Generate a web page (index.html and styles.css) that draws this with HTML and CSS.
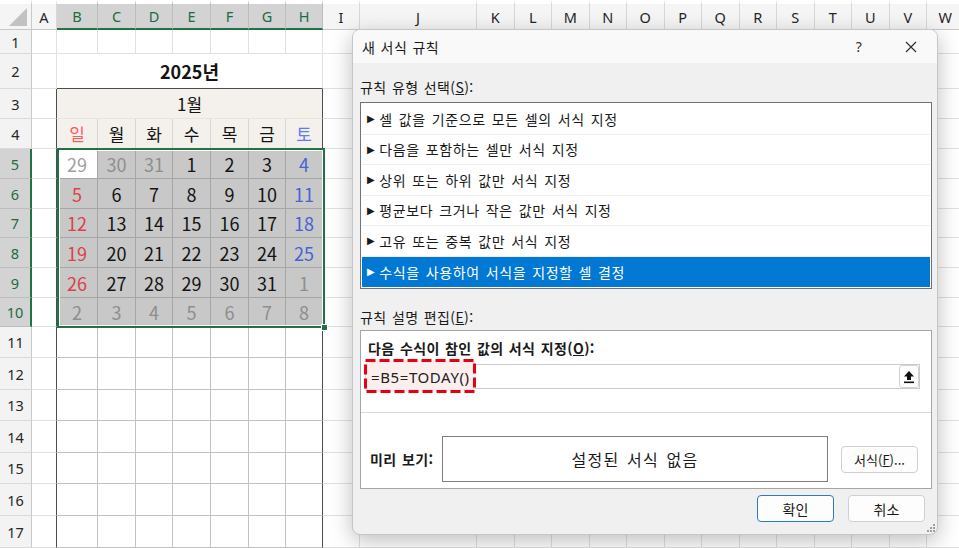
FILE: index.html
```html
<!DOCTYPE html>
<html lang="ko">
<head>
    <meta charset="UTF-8">
    <title>새 서식 규칙</title>
    <link rel="stylesheet" href="styles.css">
</head>
<body>
    <div class="screen">
        <div class="sheet" id="sheet">
            <div class="selection"></div>
        </div>

        <div class="dialog">
            <div class="dialog-title">
                <span class="title-text">새 서식 규칙</span>
                <span class="title-help">?</span>
                <span class="title-close">
                    <svg width="12" height="12" viewBox="0 0 12 12"><path d="M1 1L11 11M11 1L1 11" stroke="#2b2b2b" stroke-width="1.1" fill="none"/></svg>
                </span>
            </div>

            <div class="dialog-body">
                <div class="label">규칙 유형 선택(<u>S</u>):</div>
                <ul class="rule-list">
                    <li>셀 값을 기준으로 모든 셀의 서식 지정</li>
                    <li>다음을 포함하는 셀만 서식 지정</li>
                    <li>상위 또는 하위 값만 서식 지정</li>
                    <li>평균보다 크거나 작은 값만 서식 지정</li>
                    <li>고유 또는 중복 값만 서식 지정</li>
                    <li class="selected">수식을 사용하여 서식을 지정할 셀 결정</li>
                </ul>

                <div class="label label-edit">규칙 설명 편집(<u>E</u>):</div>
                <div class="edit-box">
                    <div class="edit-top">
                        <div class="bold-label">다음 수식이 참인 값의 서식 지정(<u>O</u>):</div>
                        <div class="formula-field">
                            <span class="formula">
                                <svg class="mark" width="112" height="34" viewBox="0 0 112 34">
                                    <rect x="1.5" y="1.5" width="109" height="31" fill="#fdeeee" stroke="#e60012" stroke-width="3" stroke-dasharray="10 4"/>
                                </svg>
                                <span class="formula-text">=B5=TODAY()</span>
                            </span>
                            <span class="collapse-btn">
                                <svg width="12" height="14" viewBox="0 0 12 14"><path d="M6 1L11 6.5H8V10H4V6.5H1Z" fill="#111"/><rect x="1" y="11.5" width="10" height="1.6" fill="#111"/></svg>
                            </span>
                        </div>
                    </div>
                    <div class="preview-row">
                        <span class="bold-label">미리 보기:</span>
                        <div class="preview">설정된 서식 없음</div>
                        <button class="btn">서식(<u>F</u>)...</button>
                    </div>
                </div>

                <div class="dialog-buttons">
                    <button class="btn btn-default">확인</button>
                    <button class="btn">취소</button>
                </div>
            </div>

            <svg class="grip" width="9" height="9" viewBox="0 0 9 9">
                <rect x="7" y="1" width="2" height="2" fill="#a0a0a0"/>
                <rect x="4" y="4" width="2" height="2" fill="#a0a0a0"/>
                <rect x="7" y="4" width="2" height="2" fill="#a0a0a0"/>
                <rect x="1" y="7" width="2" height="2" fill="#a0a0a0"/>
                <rect x="4" y="7" width="2" height="2" fill="#a0a0a0"/>
                <rect x="7" y="7" width="2" height="2" fill="#a0a0a0"/>
            </svg>
        </div>
    </div>
    <script src="script.js"></script>
</body>
</html>
```

FILE: styles.css
```css
body {
    margin: 0;
    background: #fff;
    font-family: "Noto Sans", "Noto Sans CJK KR", sans-serif;
}

.screen {
    position: relative;
    width: 959px;
    height: 548px;
    overflow: hidden;
}

/* ---- worksheet ---- */

.sheet {
    position: relative;
    display: grid;
    grid-template-columns: 32px 25px 41px 38px 37px 38px 38px 37px 37px 37px 117px repeat(13, 37.5px);
    grid-template-rows: 30px 24px 35px 30px 30px 30px 30px 29px 30px 30px 29px 31px 32px 31px 32px 31px 32px 32px;
}

.corner,
.colhead,
.rowhead,
.cell {
    box-sizing: border-box;
    display: flex;
    align-items: center;
    justify-content: center;
    border-right: 1px solid #e1e1e1;
    border-bottom: 1px solid #e1e1e1;
}

.corner {
    align-items: flex-end;
    justify-content: flex-end;
    padding: 0 4px 3px 0;
    background: #f5f5f5;
    border-top: 4px solid #fff;
    border-right-color: #c9c9c9;
    border-bottom-color: #c9c9c9;
}

.corner::after {
    content: "";
    width: 0;
    height: 0;
    border-left: 18px solid transparent;
    border-bottom: 18px solid #c2c2c2;
}

.colhead {
    background: #f5f5f5;
    border-top: 4px solid #fff;
    border-right-color: #d8d8d8;
    border-bottom-color: #c9c9c9;
    font-size: 14.5px;
    color: #262626;
}

.rowhead {
    background: #f3f3f3;
    border-right-color: #c9c9c9;
    border-bottom-color: #dadada;
    font-size: 14.5px;
    color: #262626;
}

.colhead.sel {
    background: #d3d3d3;
    color: #1d6b41;
    border-bottom: 2px solid #217346;
    border-right-color: #bdbdbd;
}

.rowhead.sel {
    background: #d3d3d3;
    color: #1d6b41;
    border-right: 2px solid #217346;
    border-bottom-color: #bdbdbd;
}

.cell {
    font-family: "Noto Sans CJK KR", sans-serif;
    font-size: 18px;
    color: #141414;
}

.merged {
    grid-column: span 7;
}

.title {
    font-weight: bold;
    border-bottom-color: #4d4d4d;
}

.month {
    background: #f4f1ec;
    font-size: 17px;
    border-bottom-color: #e9e5de;
}

.weekday {
    background: #f4f1ec;
    font-size: 17px;
    border-right-color: #d9d6d1;
    border-bottom-color: #a8a8a8;
}

.weekday.sun {
    color: #ff5a5a;
}

.weekday.sat {
    color: #5b7bff;
}

.day {
    background: #c8c8c8;
    border-right-color: #a6a6a6;
    border-bottom-color: #a6a6a6;
}

.day.sun {
    color: #d9434a;
}

.day.sat {
    color: #4763d6;
}

.day.other {
    color: #8e8e8e;
}

.day.active {
    background: #fff;
    color: #a0a0a0;
}

.grid-dark {
    border-right-color: #c2c2c2;
    border-bottom-color: #c2c2c2;
}

.box-left,
.box-right {
    border-right-color: #4d4d4d;
}

.selection {
    position: absolute;
    grid-column: 3 / 10;
    grid-row: 6 / 12;
    top: -1px;
    left: 0;
    right: -2px;
    bottom: -1px;
    border: 2px solid #217346;
    box-shadow: inset 0 0 0 1px #fff;
    pointer-events: none;
    z-index: 1;
}

.selection::after {
    content: "";
    position: absolute;
    right: -5px;
    bottom: -5px;
    width: 5px;
    height: 5px;
    background: #217346;
    border: 1px solid #fff;
}

/* ---- dialog ---- */

.dialog {
    position: absolute;
    left: 352px;
    top: 29px;
    width: 586px;
    height: 506px;
    box-sizing: border-box;
    display: flex;
    flex-direction: column;
    border: 1px solid #c6c6c6;
    border-radius: 8px;
    background: #f0f0f0;
    box-shadow: 0 6px 22px rgba(0, 0, 0, 0.26);
    overflow: hidden;
    z-index: 2;
    font-family: "Noto Sans CJK KR", sans-serif;
    font-size: 14px;
    letter-spacing: 0.4px;
    word-spacing: 1px;
    color: #1a1a1a;
}

.dialog-title {
    display: flex;
    align-items: center;
    height: 33px;
    padding-left: 9px;
    background: #f9f9f9;
}

.title-help {
    width: 20px;
    margin-left: auto;
    text-align: center;
    font-family: "Noto Sans", sans-serif;
    font-size: 14px;
    color: #333;
}

.title-close {
    display: flex;
    justify-content: center;
    width: 20px;
    margin: 0 16px 0 32px;
}

.dialog-body {
    flex: 1;
    padding: 0 5px 0 7px;
}

.label {
    margin-top: 15px;
    line-height: 18px;
}

.label-edit {
    margin-top: 19px;
}

.rule-list {
    list-style: none;
    margin: 6px 0 0;
    height: 187px;
    box-sizing: border-box;
    padding: 1px;
    border: 1px solid #727272;
    background: #fff;
    letter-spacing: 0.6px;
    word-spacing: 1.5px;
}

.rule-list li {
    display: flex;
    align-items: center;
    height: 30.5px;
    box-sizing: border-box;
    padding-left: 5px;
    border-bottom: 1px solid #efefef;
}

.rule-list li::before {
    content: "\25B6";
    font-family: "DejaVu Sans", sans-serif;
    font-size: 10px;
    margin-right: 4px;
}

.rule-list li.selected {
    background: #0078d4;
    color: #fff;
    border-bottom: none;
}

.edit-box {
    display: flex;
    flex-direction: column;
    height: 159px;
    box-sizing: border-box;
    margin-top: 4px;
    border: 1px solid #a5a5a5;
    background: #fff;
}

.edit-top {
    padding: 8px 11px 23px 4px;
    border-bottom: 1px solid #d9d9d9;
}

.edit-top .bold-label {
    margin-left: 3px;
}

.bold-label {
    font-weight: bold;
    line-height: 18px;
}

.formula-field {
    display: flex;
    align-items: center;
    height: 25px;
    box-sizing: border-box;
    margin-top: 7px;
    border: 1px solid #cbcbcb;
}

.formula {
    position: relative;
    display: flex;
    align-items: center;
    height: 100%;
}

.mark {
    position: absolute;
    left: -2px;
    top: -6px;
}

.formula-text {
    position: relative;
    padding-left: 5px;
    font-family: "Noto Sans", sans-serif;
    font-size: 15px;
    letter-spacing: 0.6px;
    color: #222;
}

.collapse-btn {
    display: flex;
    align-items: center;
    justify-content: center;
    width: 20px;
    height: 23px;
    box-sizing: border-box;
    margin-left: auto;
    border: 1px solid #d2d2d2;
    border-radius: 3px;
    background: #fdfdfd;
}

.preview-row {
    display: flex;
    align-items: center;
    padding: 23px 13px 0 9px;
}

.preview {
    width: 386px;
    height: 46px;
    box-sizing: border-box;
    margin-left: auto;
    display: flex;
    align-items: center;
    justify-content: center;
    border: 1px solid #7d7d7d;
    font-size: 16px;
    letter-spacing: 1.2px;
    word-spacing: 2px;
}

.btn {
    width: 77px;
    height: 27px;
    box-sizing: border-box;
    padding: 0;
    border: 1px solid #d0d0d0;
    border-radius: 4px;
    background: #fdfdfd;
    font-family: "Noto Sans CJK KR", sans-serif;
    font-size: 14px;
    color: #1a1a1a;
}

.preview-row .btn {
    margin-left: 13px;
    font-size: 13px;
    letter-spacing: 0;
}

.dialog-buttons {
    display: flex;
    justify-content: flex-end;
    gap: 14px;
    margin-top: 6px;
    padding-right: 7px;
}

.btn-default {
    border-color: #2f78c4;
}

.grip {
    position: absolute;
    right: 2px;
    bottom: 2px;
}
```

FILE: script.js
```js
// builds the worksheet cells behind the dialog
const sheet = document.getElementById('sheet');
const letters = 'ABCDEFGHIJKLMNOPQRSTUVW'.split('');
const weekdays = ['일', '월', '화', '수', '목', '금', '토'];
const weeks = [
    [29, 30, 31, 1, 2, 3, 4],
    [5, 6, 7, 8, 9, 10, 11],
    [12, 13, 14, 15, 16, 17, 18],
    [19, 20, 21, 22, 23, 24, 25],
    [26, 27, 28, 29, 30, 31, 1],
    [2, 3, 4, 5, 6, 7, 8]
];

function add(cls, text) {
    const el = document.createElement('div');
    el.className = cls;
    if (text != null) el.textContent = text;
    sheet.appendChild(el);
    return el;
}

add('corner');
letters.forEach((l, i) => add(i >= 1 && i <= 7 ? 'colhead sel' : 'colhead', l));

for (let r = 1; r <= 17; r++) {
    add(r >= 5 && r <= 10 ? 'rowhead sel' : 'rowhead', r);

    letters.forEach((l, i) => {
        const inCal = i >= 1 && i <= 7;

        if (r === 2 && i === 1) { add('cell merged title', '2025년'); return; }
        if (r === 3 && i === 1) { add('cell merged month box-right', '1월'); return; }
        if ((r === 2 || r === 3) && inCal) return;

        let cls = 'cell';
        let text = null;

        if (r === 4 && inCal) {
            cls += ' weekday';
            text = weekdays[i - 1];
            if (i === 1) cls += ' sun';
            if (i === 7) cls += ' sat';
        }

        if (r >= 5 && r <= 10 && inCal) {
            const w = r - 5;
            const d = i - 1;
            text = weeks[w][d];
            cls += ' day';
            if ((w === 0 && text > 20) || (w >= 4 && text < 10)) cls += ' other';
            else if (d === 0) cls += ' sun';
            else if (d === 6) cls += ' sat';
            if (w === 0 && d === 0) cls += ' active';
        }

        if (r >= 11 && inCal) cls += ' grid-dark';
        if (i === 0 && r >= 3) cls += ' box-left';
        if (i === 7 && r >= 3) cls += ' box-right';

        add(cls, text);
    });
}
```
